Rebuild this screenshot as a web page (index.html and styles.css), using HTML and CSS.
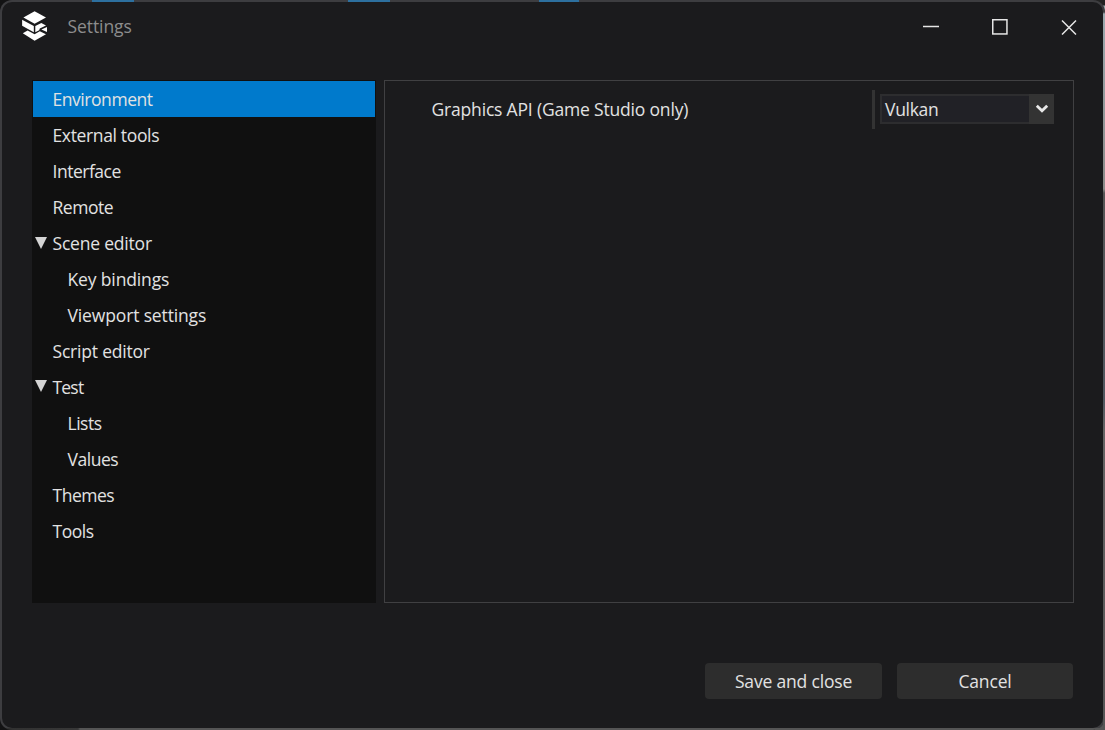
FILE: index.html
```html
<!DOCTYPE html>
<html lang="en">
<head>
<meta charset="utf-8">
<title>Settings</title>
<link rel="stylesheet" href="styles.css">
</head>
<body>
<div class="window">
  <header class="titlebar">
    <svg class="logo" width="26" height="30" viewBox="0 0 26 30" fill="#fff">
      <path d="M12.6 0.2 24 6.5 12.6 12.8 1.4 6.5Z"/>
      <path d="M0.1 8.8 11.8 15V21.3L0.1 14.8Z"/>
      <path d="M13.3 15 19.3 11.9 24 14.4 17.8 17.6 17.2 19.3 13.3 21.3Z"/>
      <path d="M19.4 18.6 25 15.9V20.9Z"/>
      <path d="M0.8 22.3 5.6 19.6 12.6 23.3 17.8 20.3 24 23.2 12.6 29.8Z"/>
    </svg>
    <h1 class="title">Settings</h1>
    <div class="controls">
      <svg width="16" height="16" viewBox="0 0 16 16"><path d="M0 7.5H16" class="stroke"/></svg>
      <svg width="16" height="16" viewBox="0 0 16 16"><rect x="0.75" y="0.75" width="14.2" height="14.2" class="stroke"/></svg>
      <svg width="16" height="16" viewBox="0 0 16 16"><path d="M1 1.5 15 15.5M15 1.5 1 15.5" class="stroke"/></svg>
    </div>
  </header>
  <main class="content">
    <ul class="tree">
      <li class="item selected"><span>Environment</span></li>
      <li class="item snug"><span>External tools</span></li>
      <li class="item tight"><span>Interface</span></li>
      <li class="item tight"><span>Remote</span></li>
      <li class="item"><svg class="arrow" width="12" height="12" viewBox="0 0 12 12"><path d="M0 0H12L6 12Z"/></svg><span>Scene editor</span></li>
      <li class="item child"><span>Key bindings</span></li>
      <li class="item child"><span>Viewport settings</span></li>
      <li class="item"><span>Script editor</span></li>
      <li class="item tighter"><svg class="arrow raised" width="12" height="12" viewBox="0 0 12 12"><path d="M0 0H12L6 12Z"/></svg><span>Test</span></li>
      <li class="item child tight"><span>Lists</span></li>
      <li class="item child tight"><span>Values</span></li>
      <li class="item tight"><span>Themes</span></li>
      <li class="item tight"><span>Tools</span></li>
    </ul>
    <section class="panel">
      <label class="label">Graphics API (Game Studio only)</label>
      <div class="field">
        <div class="select">
          <span class="value">Vulkan</span>
          <span class="drop"><svg width="14" height="10" viewBox="0 0 14 10"><path d="M1.8 1.8 7 6.8 12.2 1.8"/></svg></span>
        </div>
      </div>
    </section>
  </main>
  <footer class="footer">
    <button class="button save">Save and close</button>
    <button class="button cancel">Cancel</button>
  </footer>
</div>
</body>
</html>
```
FILE: styles.css
```css
* { box-sizing: border-box; }
body {
  margin: 0;
  width: 1105px;
  height: 730px;
  overflow: hidden;
  font: 17.5px/36px "Open Sans", "Noto Sans", sans-serif;
  color: #e2e2e2;
  background:
    linear-gradient(#222 5px, #9aa9ae 6px, #8b8b89 189px, #555 193px, #505860 400px, #646464 430px, #555 716px) 1095px 0 / 10px 730px no-repeat,
    #131314;
}
.window {
  display: flex;
  flex-direction: column;
  width: 1105px;
  height: 730px;
  border: 2px solid transparent;
  border-radius: 12px;
  background:
    linear-gradient(#1b1b1d, #1b1b1d) padding-box,
    linear-gradient(#2d709f, #2d709f) 92px 0 / 42px 2px no-repeat border-box,
    linear-gradient(#2d709f, #2d709f) 348px 0 / 42px 2px no-repeat border-box,
    linear-gradient(#2d709f, #2d709f) 539px 0 / 40px 2px no-repeat border-box,
    linear-gradient(90deg, #303030 0, #383838 78px, #555 80px, #555 100%) 0 728px / 1100px 2px no-repeat border-box,
    linear-gradient(#3d3d40 12px, #9aa9ae 14px, #8b8b89 189px, #555 193px, #505860 400px, #646464 430px, #555 728px) 1103px 0 / 2px 730px no-repeat border-box,
    linear-gradient(#3d3d40, #3d3d40) border-box;
}
.titlebar { display: flex; align-items: center; height: 50px; padding: 0 26px 0 20px; }
.logo { margin-top: -2px; }
.title { margin: -2px auto 0 19.5px; font-size: 17.5px; font-weight: 400; color: #8d8d8d; letter-spacing: -0.08px; }
.controls { display: flex; gap: 53px; }
.stroke { fill: none; stroke: #e6e6e6; stroke-width: 1.5; }
.content { display: flex; gap: 8px; height: 523px; margin: 28px 29px 0 30px; }
.tree { width: 344px; margin: 0; padding: 1px; list-style: none; background: #101010; }
.item { position: relative; height: 36px; padding-left: 19.5px; white-space: nowrap; letter-spacing: -0.2px; }
.child { padding-left: 34.5px; letter-spacing: -0.14px; }
.snug { letter-spacing: -0.35px; }
.tight { letter-spacing: -0.48px; }
.tighter { letter-spacing: -0.8px; }
.selected { background: #007acc; letter-spacing: -0.45px; }
.arrow { position: absolute; left: 2px; top: 12px; fill: #d4d4d4; }
.raised { top: 11px; }
.panel {
  display: flex;
  flex: 1;
  justify-content: space-between;
  padding: 8px 19px 0 46.5px;
  border: 1px solid #404042;
}
.label { height: 40px; line-height: 40px; letter-spacing: -0.18px; }
.field { height: 39px; margin-top: 1px; padding: 4px 0 0 5px; border-left: 3px solid #333; }
.select { display: flex; width: 174px; height: 30px; border: 2px solid #2d2d2f; background: #212126; line-height: 27px; }
.value { flex: 1; padding-left: 3px; letter-spacing: -0.3px; }
.drop { display: flex; align-items: center; justify-content: center; width: 25px; margin: -2px; background: #333; }
.drop path { fill: none; stroke: #e8e8e8; stroke-width: 2.8; }
.footer { display: flex; gap: 15px; justify-content: flex-end; margin: 60px 30px 0 0; }
.button {
  height: 36px;
  padding: 0;
  border: 0;
  border-radius: 4px;
  background: #2d2d2d;
  color: #e2e2e2;
  font: inherit;
  letter-spacing: -0.18px;
}
.save { width: 177px; }
.cancel { width: 176px; }
```
